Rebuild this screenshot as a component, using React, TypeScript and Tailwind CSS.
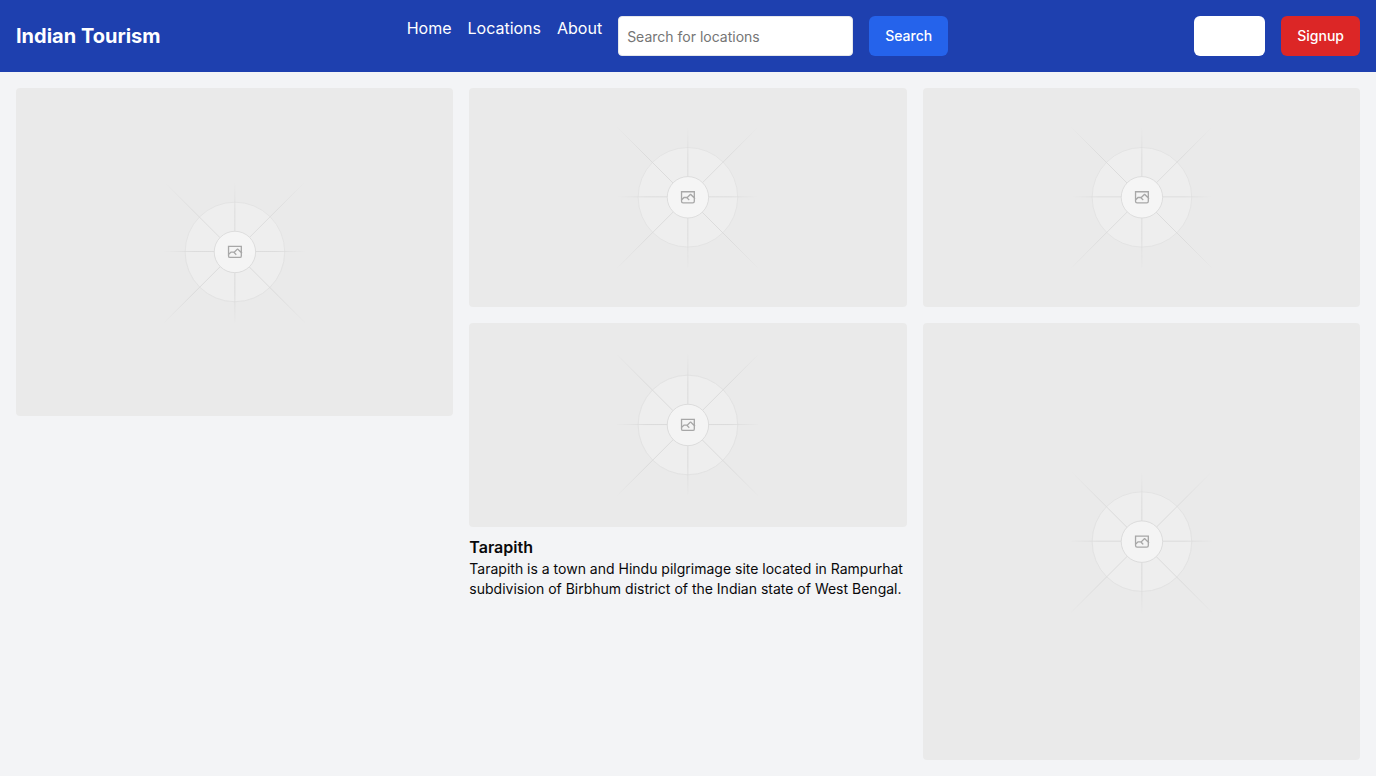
import { useId } from "react";

type PlaceholderProps = { label: string; className: string };

function PlaceholderImage({ label, className }: PlaceholderProps) {
  const id = useId();
  const fade = `${id}fade`;
  const fadeDiagonal = `${id}diagonal`;
  return (
    <svg
      role="img"
      aria-label={label}
      viewBox="0 0 1200 1200"
      preserveAspectRatio="xMidYMid slice"
      fill="none"
      className={`block w-full rounded bg-[#eaeaea] ${className}`}
    >
      <defs>
        <radialGradient id={fade} gradientUnits="userSpaceOnUse" cx="600" cy="600" r="196">
          <stop offset="0.58" stopColor="#c9c9c9" />
          <stop offset="1" stopColor="#c9c9c9" stopOpacity="0" />
        </radialGradient>
        <radialGradient id={fadeDiagonal} gradientUnits="userSpaceOnUse" cx="600" cy="600" r="277">
          <stop offset="0.58" stopColor="#c9c9c9" />
          <stop offset="1" stopColor="#c9c9c9" stopOpacity="0" />
        </radialGradient>
      </defs>
      <g opacity="0.5">
        <circle cx="600.7" cy="599.9" r="136.6" fill="#fafafa" stroke="#c9c9c9" strokeWidth="2.418" opacity="0.5" />
        <g strokeWidth="2.418">
          <path stroke={`url(#${fadeDiagonal})`} d="M404.8 795.7 796.3 404.3" />
          <path stroke={`url(#${fadeDiagonal})`} d="M795.7 796.6 404.3 405.2" />
          <path stroke={`url(#${fade})`} d="M404.8 598.7H796.6" />
          <path stroke={`url(#${fade})`} d="M600.5 795.7V404" />
        </g>
        <circle cx="600.7" cy="599.9" r="56.8" fill="#fff" stroke="#c9c9c9" strokeWidth="2.418" />
        <path
          fill="#666"
          fillRule="evenodd"
          clipRule="evenodd"
          d="M616.426 586.58h-31.434v16.176l3.553-3.554.531-.531h9.068l.074-.074 8.463-8.463h2.565l7.18 7.181V586.58Zm-15.715 14.654 3.698 3.699 1.283 1.282-2.565 2.565-1.282-1.283-5.2-5.199h-6.066l-5.514 5.514-.073.073v2.876a2.418 2.418 0 0 0 2.418 2.418h26.598a2.418 2.418 0 0 0 2.418-2.418v-8.317l-8.463-8.463-7.181 7.181-.071.072Zm-19.347 5.442v4.085a6.045 6.045 0 0 0 6.046 6.045h26.598a6.044 6.044 0 0 0 6.045-6.045v-7.108l1.356-1.355-1.282-1.283-.074-.073v-17.989h-38.689v23.43l-.146.146.146.147Z"
        />
      </g>
    </svg>
  );
}

const links = ["Home", "Locations", "About"];

function Header() {
  return (
    <header className="flex items-center justify-between bg-[#1e40af] p-4 text-white">
      <h1 className="text-xl font-bold">Indian Tourism</h1>
      <div className="flex gap-4">
        <nav aria-label="Main">
          <ul className="flex gap-4">
            {links.map((link) => (
              <li key={link}>
                <a href={`#${link.toLowerCase()}`}>{link}</a>
              </li>
            ))}
          </ul>
        </nav>
        <form className="flex gap-4" onSubmit={(event) => event.preventDefault()}>
          <input
            type="search"
            aria-label="Search for locations"
            placeholder="Search for locations"
            className="h-10 w-[235px] rounded border border-gray-200 bg-white px-2 pt-px text-sm text-black placeholder:text-[#757575]"
          />
          <button type="submit" className="h-10 rounded-md bg-[#2563eb] px-4 text-sm font-medium">
            Search
          </button>
        </form>
      </div>
      <div className="flex gap-4">
        <button type="button" aria-label="Login" className="h-10 w-[71px] rounded-md bg-white" />
        <button type="button" className="h-10 rounded-md bg-[#dc2626] px-4 text-sm font-medium">
          Signup
        </button>
      </div>
    </header>
  );
}

export default function App() {
  return (
    <div className="min-h-screen bg-[#f3f4f6] font-['Inter',sans-serif] text-[#09090b]">
      <Header />
      <main className="grid grid-cols-3 items-start gap-4 p-4">
        <PlaceholderImage label="Featured destination" className="aspect-[4/3]" />
        <div className="flex flex-col gap-4">
          <PlaceholderImage label="Destination" className="aspect-[2/1]" />
          <article>
            <PlaceholderImage label="Tarapith" className="h-[204px]" />
            <h2 className="mt-2 font-semibold">Tarapith</h2>
            <p className="text-sm">
              Tarapith is a town and Hindu pilgrimage site located in Rampurhat subdivision of Birbhum district of the
              Indian state of West Bengal.
            </p>
          </article>
        </div>
        <div className="flex flex-col gap-4">
          <PlaceholderImage label="Destination" className="aspect-[2/1]" />
          <PlaceholderImage label="Map of locations" className="aspect-square" />
        </div>
      </main>
    </div>
  );
}
